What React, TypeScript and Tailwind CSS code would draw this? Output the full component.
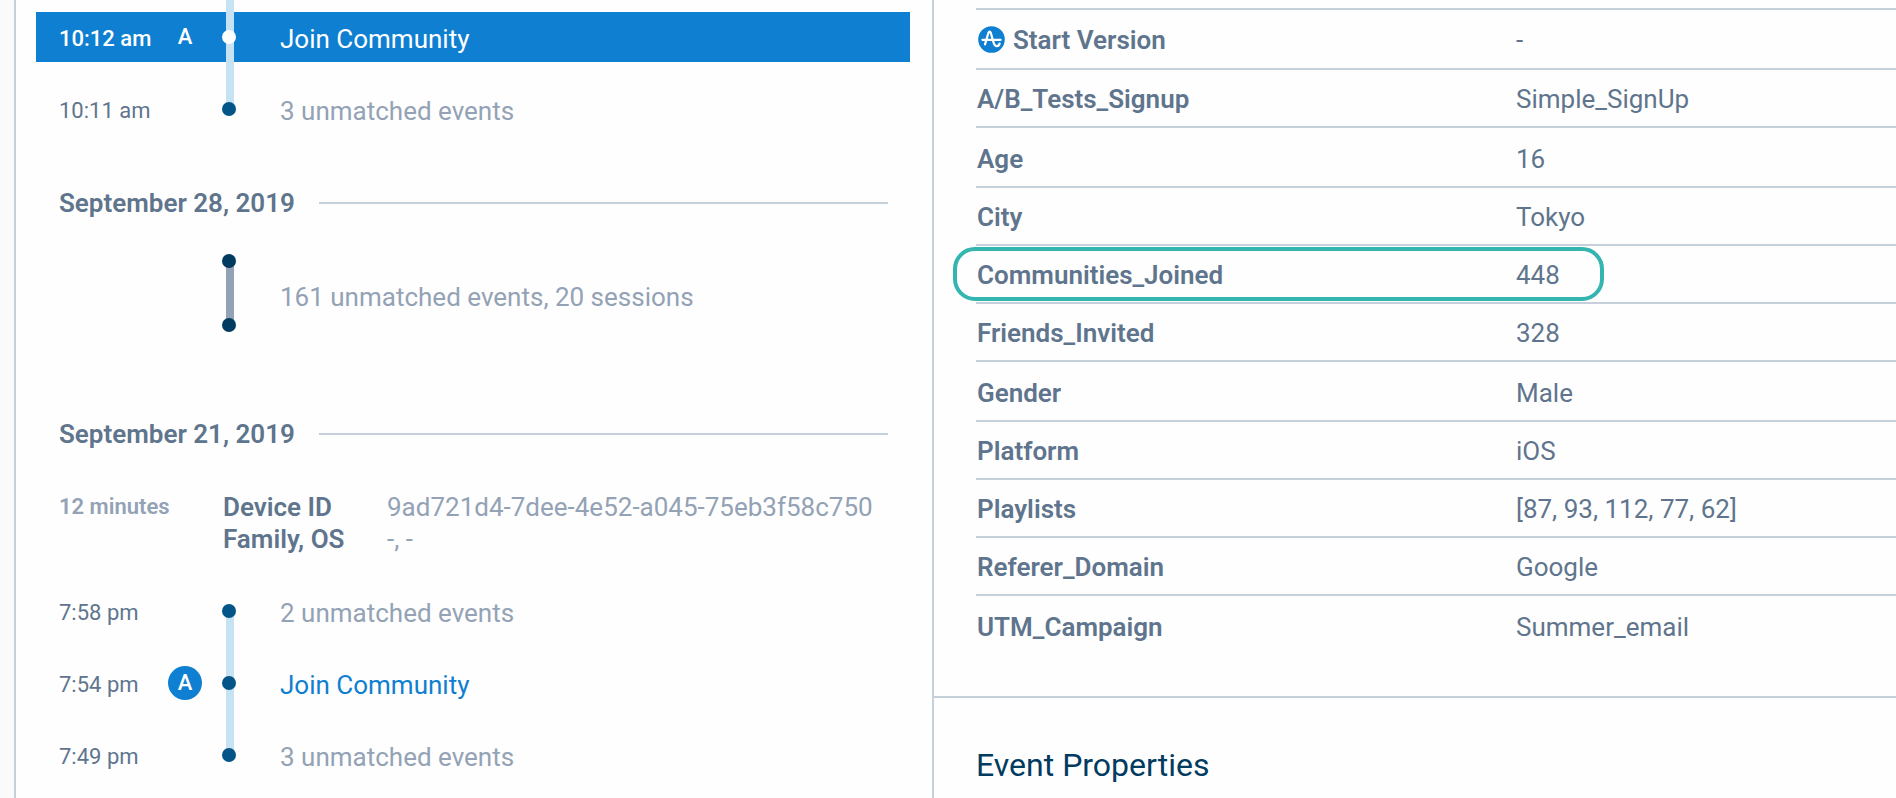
import React from 'react';

type TimelineEvent = {
    time: string;
    label: string;
    matched?: boolean;
    active?: boolean;
    lineAbove?: boolean;
    lineBelow?: boolean;
};

type Property = {
    name: string;
    value: string;
    tall?: boolean;
    builtIn?: boolean;
    highlighted?: boolean;
};

const latestEvents: TimelineEvent[] = [
    { time: '10:12 am', label: 'Join Community', matched: true, active: true, lineAbove: true, lineBelow: true },
    { time: '10:11 am', label: '3 unmatched events', lineAbove: true },
];

const olderEvents: TimelineEvent[] = [
    { time: '7:58 pm', label: '2 unmatched events', lineBelow: true },
    { time: '7:54 pm', label: 'Join Community', matched: true, lineAbove: true, lineBelow: true },
    { time: '7:49 pm', label: '3 unmatched events', lineAbove: true },
];

const properties: Property[] = [
    { name: 'Start Version', value: '-', tall: true, builtIn: true },
    { name: 'A/B_Tests_Signup', value: 'Simple_SignUp' },
    { name: 'Age', value: '16', tall: true },
    { name: 'City', value: 'Tokyo' },
    { name: 'Communities_Joined', value: '448', highlighted: true },
    { name: 'Friends_Invited', value: '328' },
    { name: 'Gender', value: 'Male', tall: true },
    { name: 'Platform', value: 'iOS' },
    { name: 'Playlists', value: '[87, 93, 112, 77, 62]' },
    { name: 'Referer_Domain', value: 'Google' },
    { name: 'UTM_Campaign', value: 'Summer_email', tall: true },
];

const EventRow: React.FC<{ event: TimelineEvent }> = ({ event }) => {
    const timeColor = event.active ? 'text-white font-medium' : 'text-[#5f758d]';

    return (
        <li className={`grid h-[50px] grid-cols-[109px_54px_58px_1fr] items-center pl-[23px] ${event.active ? 'bg-[#0f7fd1]' : ''}`}>
            <time className={`pt-1 text-[22px] ${timeColor}`}>{event.time}</time>
            <div>
                {event.matched && (
                    <span className="flex size-[34px] items-center justify-center rounded-full bg-[#0f7fd1] text-[22px] font-medium text-white">
                        A
                    </span>
                )}
            </div>
            <div className="relative -my-3 flex w-3.5 flex-col self-stretch">
                <div className={`ml-1 w-2 flex-1 ${event.lineAbove ? 'bg-[#c7e2f3]' : ''}`} />
                <div className={`ml-1 w-2 flex-1 ${event.lineBelow ? 'bg-[#c7e2f3]' : ''}`} />
                <div className={`absolute inset-0 m-auto size-3.5 rounded-full ${event.active ? 'bg-white' : 'bg-[#045587]'}`} />
            </div>
            {event.matched ? (
                <a href="#" className={`pt-1 ${event.active ? 'text-white' : 'text-[#0f7fd1]'}`}>
                    {event.label}
                </a>
            ) : (
                <span className="pt-1 text-[#93a2b5]">{event.label}</span>
            )}
        </li>
    );
};

const DayHeading: React.FC<{ date: string }> = ({ date }) => (
    <div className="flex h-8 items-center gap-6 pl-[23px] pr-[22px]">
        <h3 className="font-semibold">{date}</h3>
        <div className="h-0.5 flex-1 bg-[#c5d0db]" />
    </div>
);

const BuiltInIcon: React.FC = () => (
    <svg className="ml-px size-[27px] shrink-0" viewBox="0 0 27 27" fill="none" aria-hidden="true">
        <circle cx="13.5" cy="13.5" r="13.3" fill="#0f7fd1" />
        <path
            d="M4.4 13.8H22.6M7 18.4L10.3 7.2Q11.6 3.8 12.9 7.2L15.6 16.6C16.6 20.8 20.4 21.4 21.6 17.6"
            stroke="#fff"
            strokeWidth="2.2"
            strokeLinecap="round"
            strokeLinejoin="round"
        />
    </svg>
);

const PropertyRow: React.FC<{ property: Property }> = ({ property }) => {
    const height = property.tall ? 'h-[60px]' : 'h-[58px]';
    const padding = property.tall && !property.builtIn ? 'pt-1' : 'pt-px';

    return (
        <tr className={height}>
            <th scope="row" className={`relative w-[540px] border-t-2 border-[#c5d0db] pl-px font-semibold ${padding}`}>
                {property.highlighted && (
                    <div className="absolute top-px -left-[23px] h-[54px] w-[651px] rounded-[22px] border-4 border-[#34b5b0]" />
                )}
                <div className="flex items-center gap-2">
                    {property.builtIn && <BuiltInIcon />}
                    <span className="whitespace-nowrap">{property.name}</span>
                </div>
            </th>
            <td className={`border-t-2 border-[#c5d0db] ${padding}`}>{property.value}</td>
        </tr>
    );
};

const App: React.FC = () => {
    return (
        <div className="grid min-h-screen grid-cols-[14px_920fr_962fr] bg-[#fafafa] font-[Roboto,sans-serif] text-[26px] leading-8 text-[#5f758d]">
            <div />
            <section className="border-x-2 border-[#c5d0db] bg-[#fefefe] pt-3 pr-[22px] pl-5">
                <ul className="flex flex-col gap-[22px]">
                    {latestEvents.map((event) => (
                        <EventRow key={event.time} event={event} />
                    ))}
                </ul>

                <div className="mt-[53px]">
                    <DayHeading date="September 28, 2019" />
                </div>
                <div className="mt-[35px] grid h-[86px] grid-cols-[163px_58px_1fr] items-center pl-[23px]">
                    <div />
                    <div className="flex h-[78px] w-3.5 flex-col self-start">
                        <div className="relative size-3.5 rounded-full bg-[#023b60]" />
                        <div className="-my-1 ml-1 w-2 flex-1 bg-[#93a2b5]" />
                        <div className="relative size-3.5 rounded-full bg-[#023b60]" />
                    </div>
                    <span className="text-[#93a2b5]">161 unmatched events, 20 sessions</span>
                </div>

                <div className="mt-[78px]">
                    <DayHeading date="September 21, 2019" />
                </div>
                <div className="mt-[41px] grid grid-cols-[164px_1fr] pl-[23px]">
                    <span className="text-[22px] font-semibold text-[#93a2b5]">12 minutes</span>
                    <dl className="grid grid-cols-[164px_1fr]">
                        <dt className="font-semibold">Device ID</dt>
                        <dd className="whitespace-nowrap text-[#93a2b5]">9ad721d4-7dee-4e52-a045-75eb3f58c750</dd>
                        <dt className="font-semibold">Family, OS</dt>
                        <dd className="text-[#93a2b5]">-, -</dd>
                    </dl>
                </div>
                <ul className="mt-[31px] flex flex-col gap-[22px]">
                    {olderEvents.map((event) => (
                        <EventRow key={event.time} event={event} />
                    ))}
                </ul>
            </section>

            <main className="min-w-0 bg-[#fefefe]">
                <section className="border-b-2 border-[#c5d0db] pt-2 pb-[42px] pl-[42px]">
                    <table className="w-full table-fixed border-separate border-spacing-0 text-left">
                        <tbody>
                            {properties.map((property) => (
                                <PropertyRow key={property.name} property={property} />
                            ))}
                        </tbody>
                    </table>
                </section>
                <h2 className="mt-[47px] pl-[42px] text-[32px] leading-10 text-[#023b60]">Event Properties</h2>
            </main>
        </div>
    );
};

export default App;
